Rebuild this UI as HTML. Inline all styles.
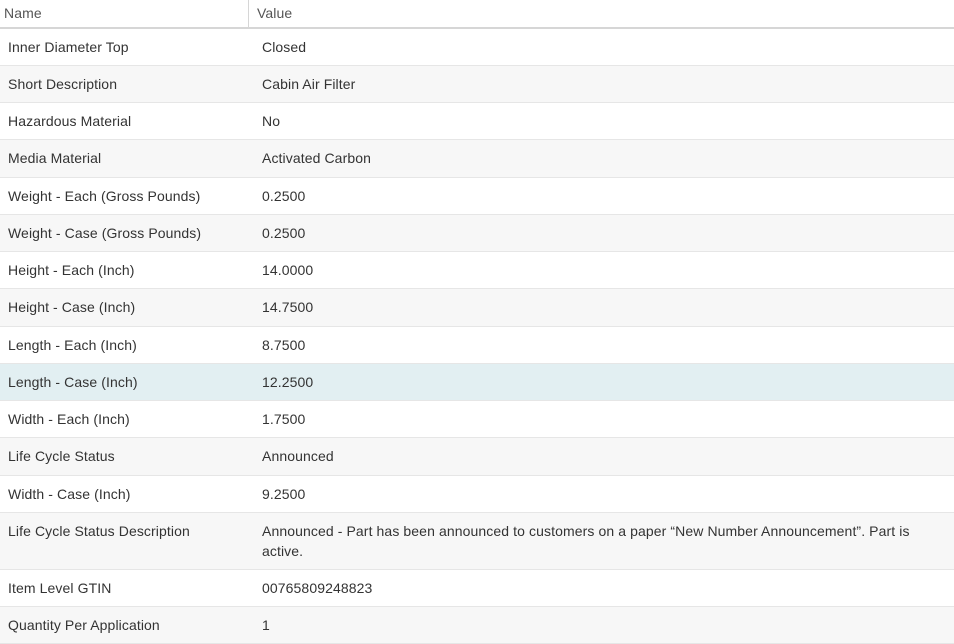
<!DOCTYPE html>
<html><head><style>
body{margin:0;width:954px;height:632px;overflow:hidden;background:#fff;font-family:"Liberation Sans",sans-serif;color:#333;font-size:14px;letter-spacing:0.1px}
.h{position:absolute;top:0;left:0;width:954px;height:27px;border-bottom:2px solid #d6d6d6;color:#555}
.h span{position:absolute;top:5px}
.h .d{position:absolute;left:248px;top:0;width:1px;height:27px;background:#d6d6d6}
.r{position:absolute;left:0;width:954px;border-bottom:1px solid #e6e6e6;box-sizing:border-box}
.r .n{position:absolute;left:8px;top:10px}
.r .v{position:absolute;left:262px;top:10px;width:670px;line-height:20px;margin-top:-2px}
.a{background:#f7f7f7}.s{background:#e2eff2}
</style></head><body>
<div class="h"><span style="left:4px">Name</span><div class="d"></div><span style="left:257px">Value</span></div>
<div class="r" style="top:29px;height:37px"><span class="n">Inner Diameter Top</span><span class="v">Closed</span></div>
<div class="r a" style="top:66px;height:37px"><span class="n">Short Description</span><span class="v">Cabin Air Filter</span></div>
<div class="r" style="top:103px;height:37px"><span class="n">Hazardous Material</span><span class="v">No</span></div>
<div class="r a" style="top:140px;height:38px"><span class="n">Media Material</span><span class="v">Activated Carbon</span></div>
<div class="r" style="top:178px;height:37px"><span class="n">Weight - Each (Gross Pounds)</span><span class="v">0.2500</span></div>
<div class="r a" style="top:215px;height:37px"><span class="n">Weight - Case (Gross Pounds)</span><span class="v">0.2500</span></div>
<div class="r" style="top:252px;height:37px"><span class="n">Height - Each (Inch)</span><span class="v">14.0000</span></div>
<div class="r a" style="top:289px;height:38px"><span class="n">Height - Case (Inch)</span><span class="v">14.7500</span></div>
<div class="r" style="top:327px;height:37px"><span class="n">Length - Each (Inch)</span><span class="v">8.7500</span></div>
<div class="r s" style="top:364px;height:37px"><span class="n">Length - Case (Inch)</span><span class="v">12.2500</span></div>
<div class="r" style="top:401px;height:37px"><span class="n">Width - Each (Inch)</span><span class="v">1.7500</span></div>
<div class="r a" style="top:438px;height:38px"><span class="n">Life Cycle Status</span><span class="v">Announced</span></div>
<div class="r" style="top:476px;height:37px"><span class="n">Width - Case (Inch)</span><span class="v">9.2500</span></div>
<div class="r a" style="top:513px;height:57px"><span class="n">Life Cycle Status Description</span><span class="v">Announced - Part has been announced to customers on a paper “New Number Announcement”. Part is active.</span></div>
<div class="r" style="top:570px;height:37px"><span class="n">Item Level GTIN</span><span class="v">00765809248823</span></div>
<div class="r a" style="top:607px;height:37px"><span class="n">Quantity Per Application</span><span class="v">1</span></div>
</body></html>
